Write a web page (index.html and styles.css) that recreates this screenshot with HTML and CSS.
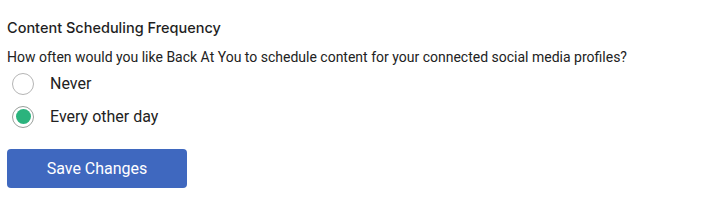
FILE: index.html
```html
<!DOCTYPE html>
<html>
<head>
<title>Content Scheduling Frequency</title>
<meta name="viewport" content="width=device-width, initial-scale=1.0">
<link rel="stylesheet" href="styles.css">
</head>
<body>

<form class="setting">
  <h2 class="setting-title">Content Scheduling Frequency</h2>
  <p class="setting-help">How often would you like Back At You to schedule content for your connected social media profiles?</p>

  <label class="option">
    <input type="radio" name="frequency" value="never">
    <span class="dot"></span>
    <span class="option-label">Never</span>
  </label>
  <label class="option">
    <input type="radio" name="frequency" value="every-other-day" checked>
    <span class="dot"></span>
    <span class="option-label">Every other day</span>
  </label>

  <button type="button" class="save-btn">Save Changes</button>
</form>

</body>
</html>
```

FILE: styles.css
```css
body {
  font-family: Roboto, "Liberation Sans", Arial, sans-serif;
  background-color: #ffffff;
  color: #222222;
  margin: 0;
  padding: 18px 7px;
}
.setting-title {
  font-family: Inter, Roboto, sans-serif;
  font-size: 14.5px;
  font-weight: 500;
  color: #1f1f1f;
  margin: 0 0 9px;
  line-height: 20px;
}
.setting-help {
  font-size: 14px;
  margin: 0;
  line-height: 20px;
  color: #222;
}
.option {
  display: flex;
  align-items: center;
  height: 33px;
  cursor: pointer;
}
.option input {
  display: none;
}
.dot {
  width: 20px;
  height: 20px;
  border: 1px solid #b5b5b5;
  border-radius: 50%;
  margin-left: 5px;
  margin-right: 16px;
  display: flex;
  align-items: center;
  justify-content: center;
  flex-shrink: 0;
}
.option input:checked + .dot {
  border-color: #9aa09c;
}
.option input:checked + .dot::after {
  content: "";
  width: 15px;
  height: 15px;
  border-radius: 50%;
  background-color: #2bb37d;
}
.option-label {
  font-size: 16px;
  color: #222;
}
.save-btn {
  display: block;
  margin-top: 16px;
  width: 180px;
  height: 39px;
  border: none;
  border-radius: 4px;
  background-color: #3f68bf;
  color: #ffffff;
  font-family: Roboto, sans-serif;
  font-size: 16px;
  cursor: pointer;
}
```
